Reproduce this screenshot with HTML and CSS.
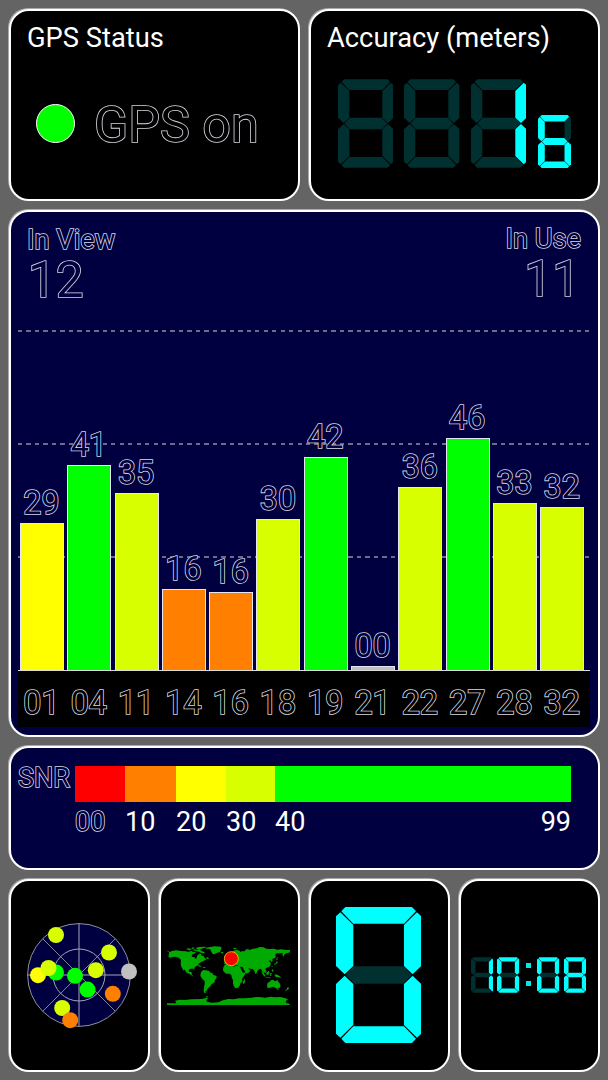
FILE: index.html
```html
<!DOCTYPE html>
<html lang="en">
<head>
  <meta charset="UTF-8" />
  <title>GPS Status</title>
  <link rel="stylesheet" href="styles.css">
</head>
<body>
  <!-- Seven segment digit, each segment is lit through a css variable -->
  <svg class="defs">
    <symbol id="digit" viewBox="0 0 256 408">
      <polygon class="seg-a" points="28,0 228,0 240,13 204,50 52,50 16,13" />
      <polygon class="seg-b" points="243,16 256,28 256,177 230,202 204,177 204,54" />
      <polygon class="seg-c" points="230,206 256,231 256,380 243,392 204,354 204,231" />
      <polygon class="seg-d" points="52,358 204,358 240,395 228,408 28,408 16,395" />
      <polygon class="seg-e" points="26,206 52,231 52,354 13,392 0,380 0,231" />
      <polygon class="seg-f" points="13,16 52,54 52,177 26,202 0,177 0,28" />
      <polygon class="seg-g" points="54,178 202,178 227,204 202,230 54,230 29,204" />
    </symbol>
  </svg>

  <div class="dashboard">
    <!-- Status -->
    <div class="panel half">
      <h1 class="title">GPS Status</h1>
      <div class="status">
        <span class="led"></span>
        <span class="outline status-text">GPS on</span>
      </div>
    </div>

    <div class="panel half">
      <h1 class="title">Accuracy (meters)</h1>
      <div class="accuracy">
        <svg class="digit"><use href="#digit" /></svg>
        <svg class="digit"><use href="#digit" /></svg>
        <svg class="digit d1"><use href="#digit" /></svg>
        <svg class="digit small d6"><use href="#digit" /></svg>
      </div>
    </div>

    <!-- Signal chart -->
    <div class="panel full blue chart">
      <div class="counts outline">
        <div class="count">
          <div class="count-label">In View</div>
          <div class="count-value">12</div>
        </div>
        <div class="count in-use">
          <div class="count-label">In Use</div>
          <div class="count-value">11</div>
        </div>
      </div>
      <div class="plot outline">
        <div class="bars">
          <div class="sat"><span>29</span><div class="bar yellow" style="height: 147px"></div></div>
          <div class="sat"><span>41</span><div class="bar green" style="height: 205px"></div></div>
          <div class="sat"><span>35</span><div class="bar lime" style="height: 177px"></div></div>
          <div class="sat"><span>16</span><div class="bar orange" style="height: 81px"></div></div>
          <div class="sat"><span>16</span><div class="bar orange" style="height: 78px"></div></div>
          <div class="sat"><span>30</span><div class="bar lime" style="height: 151px"></div></div>
          <div class="sat"><span>42</span><div class="bar green" style="height: 213px"></div></div>
          <div class="sat"><span>00</span><div class="bar gray" style="height: 4px"></div></div>
          <div class="sat"><span>36</span><div class="bar lime" style="height: 183px"></div></div>
          <div class="sat"><span>46</span><div class="bar green" style="height: 232px"></div></div>
          <div class="sat"><span>33</span><div class="bar lime" style="height: 167px"></div></div>
          <div class="sat"><span>32</span><div class="bar lime" style="height: 163px"></div></div>
        </div>
        <div class="ids">
          <span>01</span><span>04</span><span>11</span><span>14</span><span>16</span><span>18</span>
          <span>19</span><span>21</span><span>22</span><span>27</span><span>28</span><span>32</span>
        </div>
      </div>
    </div>

    <!-- SNR legend -->
    <div class="panel full blue snr">
      <span class="outline snr-label">SNR</span>
      <div class="scale">
        <div class="red"></div>
        <div class="orange"></div>
        <div class="yellow"></div>
        <div class="lime"></div>
        <div class="green"></div>
        <span class="outline">00</span>
        <span>10</span>
        <span>20</span>
        <span>30</span>
        <span class="range"><b>40</b><b>99</b></span>
      </div>
    </div>

    <!-- Bottom widgets -->
    <div class="panel widget">
      <svg class="sky" viewBox="0 0 110 104">
        <circle class="disc" cx="52" cy="52" r="51.4" />
        <g class="rings">
          <circle cx="52" cy="52" r="26" />
          <path d="M52 .6V103.4M.6 52H103.4" />
          <path class="thin" d="M15.7 15.7L88.3 88.3M88.3 15.7L15.7 88.3" />
        </g>
        <g>
          <circle class="yellow" cx="11" cy="52.2" r="8" />
          <circle class="green" cx="29" cy="49.5" r="8" />
          <circle class="lime" cx="21.5" cy="45" r="8" />
          <circle class="green" cx="48" cy="52.8" r="8" />
          <circle class="green" cx="60.5" cy="66.6" r="8" />
          <circle class="lime" cx="68.8" cy="47.2" r="8" />
          <circle class="lime" cx="82" cy="29.5" r="8" />
          <circle class="lime" cx="29" cy="12" r="8" />
          <circle class="gray" cx="102" cy="48.5" r="8" />
          <circle class="orange" cx="85.8" cy="70.8" r="8" />
          <circle class="lime" cx="35.2" cy="85" r="8" />
          <circle class="orange" cx="43.2" cy="97.2" r="8" />
        </g>
      </svg>
    </div>

    <div class="panel widget">
      <svg class="map" viewBox="36 62 369 178">
        <!-- North America -->
        <path d="M36 76l6 2-2 3zM42 81l9-4 12-2 14 2 14 1 10 1 8-2 6 3 8-1-3 5-9 4-1 6 8 2 5 6 3-9 3-6 7 1 5 4 5-1 3 7 5 4-7 4-8 4-7 4-2 4-5 4-5 2-2 5 1 6-4-5-8 0-6 3 1 6 6 1 3 3-1 5 4 3 5 2-5 0-9-6-10-5-6-8-3-2 2 7-6-9-4-8-1-9 1-9-7-7-10-3-9 1-10 5 4-4-6 0 1-4z" />
        <path d="M93 71l7-2 6 1 4 4-8 1zM107 69l8-3 4 2-5 3zM113 75l5-3 7 1 8-1 8 6 8 2-1 4-9-1-6-3-9-3zM121 68l11-3 17-1 7 1-11 4-9 3-9-1zM132 84l5 1 3 4-6 0z" />
        <path d="M152 68l12-3 16-2 17 1 3 3-3 8-2 5-9 2-8 5-5-1-5-8-1-5-6-3-9 0z" />
        <path d="M196 81l7-1 3 2-5 3zM125 121l7-1 8 3-2 1-9-1zM141 125l7 0 5 3-6 0zM153 97l6-1 3 4-7 1z" />
        <!-- South America -->
        <path d="M139 139l6-5 7 1 9 1 6 6 6 2 1 4 11 4-1 7-4 5-2 8-8 4-4 7-5 4-4 4-2 5-4 3 2 4-5 0-2-6 1-10 2-11 0-9-7-6-6-9 1-8z" />
        <!-- Africa -->
        <path d="M208 120l8-2 10-2 4 1 0 4 9 3 4-3 11 2 3 6 5 11 4 2 7-1-2 5-7 10-3 5 1 8-6 5-1 6-5 7-8 2-5-5-3-10 0-9-4-9-1-7-5-4-10 0-7-5-3-5 1-9z" />
        <path d="M268 162l3 1-2 10-4 3-2-5z" />
        <!-- Europe and Asia -->
        <path d="M208 116l0-8 8 0-3-6 8-6 7-3-2-5 6-9 7-4 8-1 8 3 0 3 5-2 9 0 2-4 5 1 5-3 3 2 10-4 13-1 7-4 12 1 8 4 10 1 10-1 12 3 13-1 13 2 13 0 5 3-8 1 3 3-11 2-6 5-2 6-4-6 2-5-10 1-9 0-5 5 3 2-2 6-9 4 1 6-3 3-4-5-5 2 5 4 2 6-5 7-9 4-3 3 4 8-4 5-5-5 1 8 4 6-5-4-3-10-3-4-2-5-5 1-6 6-2 7-3 2-5-11-4-4-8-1-6-1 4 4 3 2-3 6-8 4-3-2-7-13-2-5-8-1-5 0-2-4-3-2 0 5-5-5-5-1 5 5-2 2-5-5-8 0-4 5z" />
        <path d="M213 91l5 1 1 8-7 2 1-5zM233 69l8-2 5 1-6 4zM271 76l3-5 7-1-6 5zM305 68l7-1 3 2-6 1zM351 72l9-1 4 2-9 1zM366 94l2 2-1 9-3 0zM365 108l4 2-4 5-6 3-2-2 6-3zM350 122l3 1-2 4zM300 139l3 3-2 3zM351 130l5 6-1 4-5-3z" />
        <path d="M385 78l19-1v4l-12 3zM318 138l6 3 7 9-1 4-5-4zM334 142l6-5 4 3-4 9-6-1zM330 154l10 2 9 1-4 2-14-3zM345 144l7-1-4 4 2 5-4 0zM355 145l4 4 5-2 11 6 4 5-10-3-6 1-5-7z" />
        <!-- Australia and islands -->
        <path d="M338 172l6-3 5-5 7-1 2 4 6 1 2-6 4 7 5 6 2 7-4 7-7 1-6-3-5-3-9 3-8 1-2-6zM366 191l5 0-3 4zM398 185l5 3-4 5-7 3 3-4zM391 193l3 1-3 3z" />
        <!-- Antarctica -->
        <path d="M36 240V234L64 234 60 226 74 223 90 224 108 222 140 221 157 217 160 219 154 224 156 229 170 232 190 231 204 225 220 221 236 222 252 219 270 219 290 217 306 215 320 216 330 217 347 214 360 216 376 215 390 218 399 222 392 228 394 233 404 235V240zM152 214l7-3 0 2-5 4z" />
        <circle class="marker" cx="229" cy="100" r="21" />
      </svg>
    </div>

    <div class="panel widget">
      <svg class="digit big d0"><use href="#digit" /></svg>
    </div>

    <div class="panel widget clock">
      <svg class="digit tiny d1"><use href="#digit" /></svg>
      <svg class="digit tiny d0"><use href="#digit" /></svg>
      <div class="colon"><i></i><i></i></div>
      <svg class="digit tiny d0"><use href="#digit" /></svg>
      <svg class="digit tiny d8"><use href="#digit" /></svg>
    </div>
  </div>
</body>
</html>
```
FILE: styles.css
```css
* { box-sizing: border-box; }
body {
  margin: 0;
  background: #646464;
  color: #fff;
  font-family: Roboto, sans-serif;
  overflow: hidden;
}
.defs {
  display: block;
  width: 0;
  height: 0;
}
.dashboard {
  display: grid;
  grid-template-columns: repeat(4, 141px);
  grid-template-rows: 192px 527px 124px 193px;
  gap: 9px;
  padding: 9px 8px 8px 9px;
}
.panel {
  background: #000;
  border: 2px solid #fff;
  border-radius: 20px;
  box-shadow: -1px -1px 0 rgba(255, 255, 255, 0.45);
}
.half { grid-column: span 2; }
.full { grid-column: span 4; }
.blue { background: #000040; }

/* Hollow text, the fill hides the inner half of the stroke */
.outline {
  color: #000;
  -webkit-text-stroke: 1.6px #d8d8e0;
  paint-order: stroke fill;
}
.blue .outline { color: #000040; }

/* Signal colors */
.red { background: #ff0000; }
.orange { background: #ff8000; fill: #ff8000; }
.yellow { background: #ffff00; fill: #ffff00; }
.lime { background: #d8ff00; fill: #d8ff00; }
.green { background: #00ff00; fill: #00ff00; }
.gray { background: #c0c0c0; fill: #c0c0c0; }

.title {
  margin: 0;
  padding: 11px 0 0 16px;
  font-size: 27.3px;
  font-weight: 400;
  line-height: 32px;
}
.status {
  display: flex;
  gap: 19px;
  padding: 41px 0 0 25px;
}
.led {
  width: 39px;
  height: 39px;
  margin-top: 9px;
  border: 1.5px solid #fff;
  border-radius: 50%;
  background: #00ff00;
}
.status-text {
  font-size: 50.3px;
  line-height: 60px;
}

/* Seven segment digits */
.digit {
  display: block;
  width: 55.6px;
  height: 89px;
}
.small { width: 33.3px; height: 53px; margin-left: 0.6px; }
.big { width: 85.3px; height: 136px; }
.tiny { width: 22.4px; height: 36px; }
.seg-a { fill: var(--a, #003030); }
.seg-b { fill: var(--b, #003030); }
.seg-c { fill: var(--c, #003030); }
.seg-d { fill: var(--d, #003030); }
.seg-e { fill: var(--e, #003030); }
.seg-f { fill: var(--f, #003030); }
.seg-g { fill: var(--g, #003030); }
.d0 { --a: #0ff; --b: #0ff; --c: #0ff; --d: #0ff; --e: #0ff; --f: #0ff; }
.d1 { --b: #0ff; --c: #0ff; }
.d6 { --a: #0ff; --c: #0ff; --d: #0ff; --e: #0ff; --f: #0ff; --g: #0ff; }
.d8 { --a: #0ff; --b: #0ff; --c: #0ff; --d: #0ff; --e: #0ff; --f: #0ff; --g: #0ff; }
.accuracy {
  display: flex;
  align-items: flex-end;
  gap: 11px;
  padding: 25px 0 0 26.7px;
}

/* Chart */
.counts {
  display: flex;
  justify-content: space-between;
  height: 118px;
  padding: 12px 17px 0 16px;
}
.count-label {
  font-size: 27.3px;
  line-height: 32px;
}
.count-value {
  margin-top: 4px;
  padding: 0 1px;
  font-size: 49.5px;
  line-height: 40px;
}
.in-use {
  margin-top: -1.5px;
  text-align: right;
}
.plot {
  margin: 0 8px 0 7px;
  font-size: 32.3px;
  line-height: 40px;
}
.bars {
  --dash: repeating-linear-gradient(90deg, #6c6c88 0 4.3px, transparent 4.3px 8.47px);
  display: flex;
  align-items: flex-end;
  gap: 3.3px;
  height: 340px;
  padding-left: 2px;
  background: var(--dash) 0 0 / 571px 2px no-repeat,
    var(--dash) 0 113px / 571px 2px no-repeat,
    var(--dash) 0 226px / 571px 2px no-repeat;
}
.sat {
  width: 44px;
  text-align: center;
}
.sat span {
  display: block;
  margin-left: -1px;
}
.bar {
  border: 1px solid #e6e6f2;
  border-bottom: 0;
}
.ids {
  display: flex;
  gap: 3.3px;
  height: 57px;
  padding: 12px 0 0 1.5px;
  border-top: 1px solid #dcdcdc;
  background: #000;
  color: #000;
  text-align: center;
}
.ids span { width: 44px; }

/* SNR legend */
.snr {
  display: flex;
  padding: 18px 27px 0 7px;
  font-size: 27px;
}
.snr-label {
  width: 57px;
  line-height: 25px;
}
.scale {
  display: grid;
  grid-template-columns: 50px 51px 50px 49px 296px;
  grid-template-rows: 36px 40px;
  line-height: 40px;
}
.scale b { font-weight: 400; }
.range {
  display: flex;
  justify-content: space-between;
}

/* Bottom widgets */
.widget {
  display: flex;
  align-items: center;
  justify-content: center;
  padding: 0 2px 2px 0;
}
.sky {
  width: 110px;
  height: 104px;
  margin-left: 6px;
  overflow: visible;
}
.disc {
  fill: #000040;
  stroke: #b4b4bc;
  stroke-width: 0.8;
}
.rings {
  fill: none;
  stroke: #a4a4b4;
  stroke-width: 1;
}
.thin { stroke-width: 0.8; }
.map {
  width: 123px;
  height: 59.3px;
  margin: 2px 0 0 0;
  fill: #00aa00;
}
.marker {
  fill: #ff0000;
  stroke: #ffc800;
  stroke-width: 2.5;
}
.clock { gap: 4.2px; }
.colon {
  display: flex;
  flex-direction: column;
  gap: 13px;
  margin: 0 2px;
}
.colon i {
  width: 5px;
  height: 5px;
  background: #00e8e8;
}
```
